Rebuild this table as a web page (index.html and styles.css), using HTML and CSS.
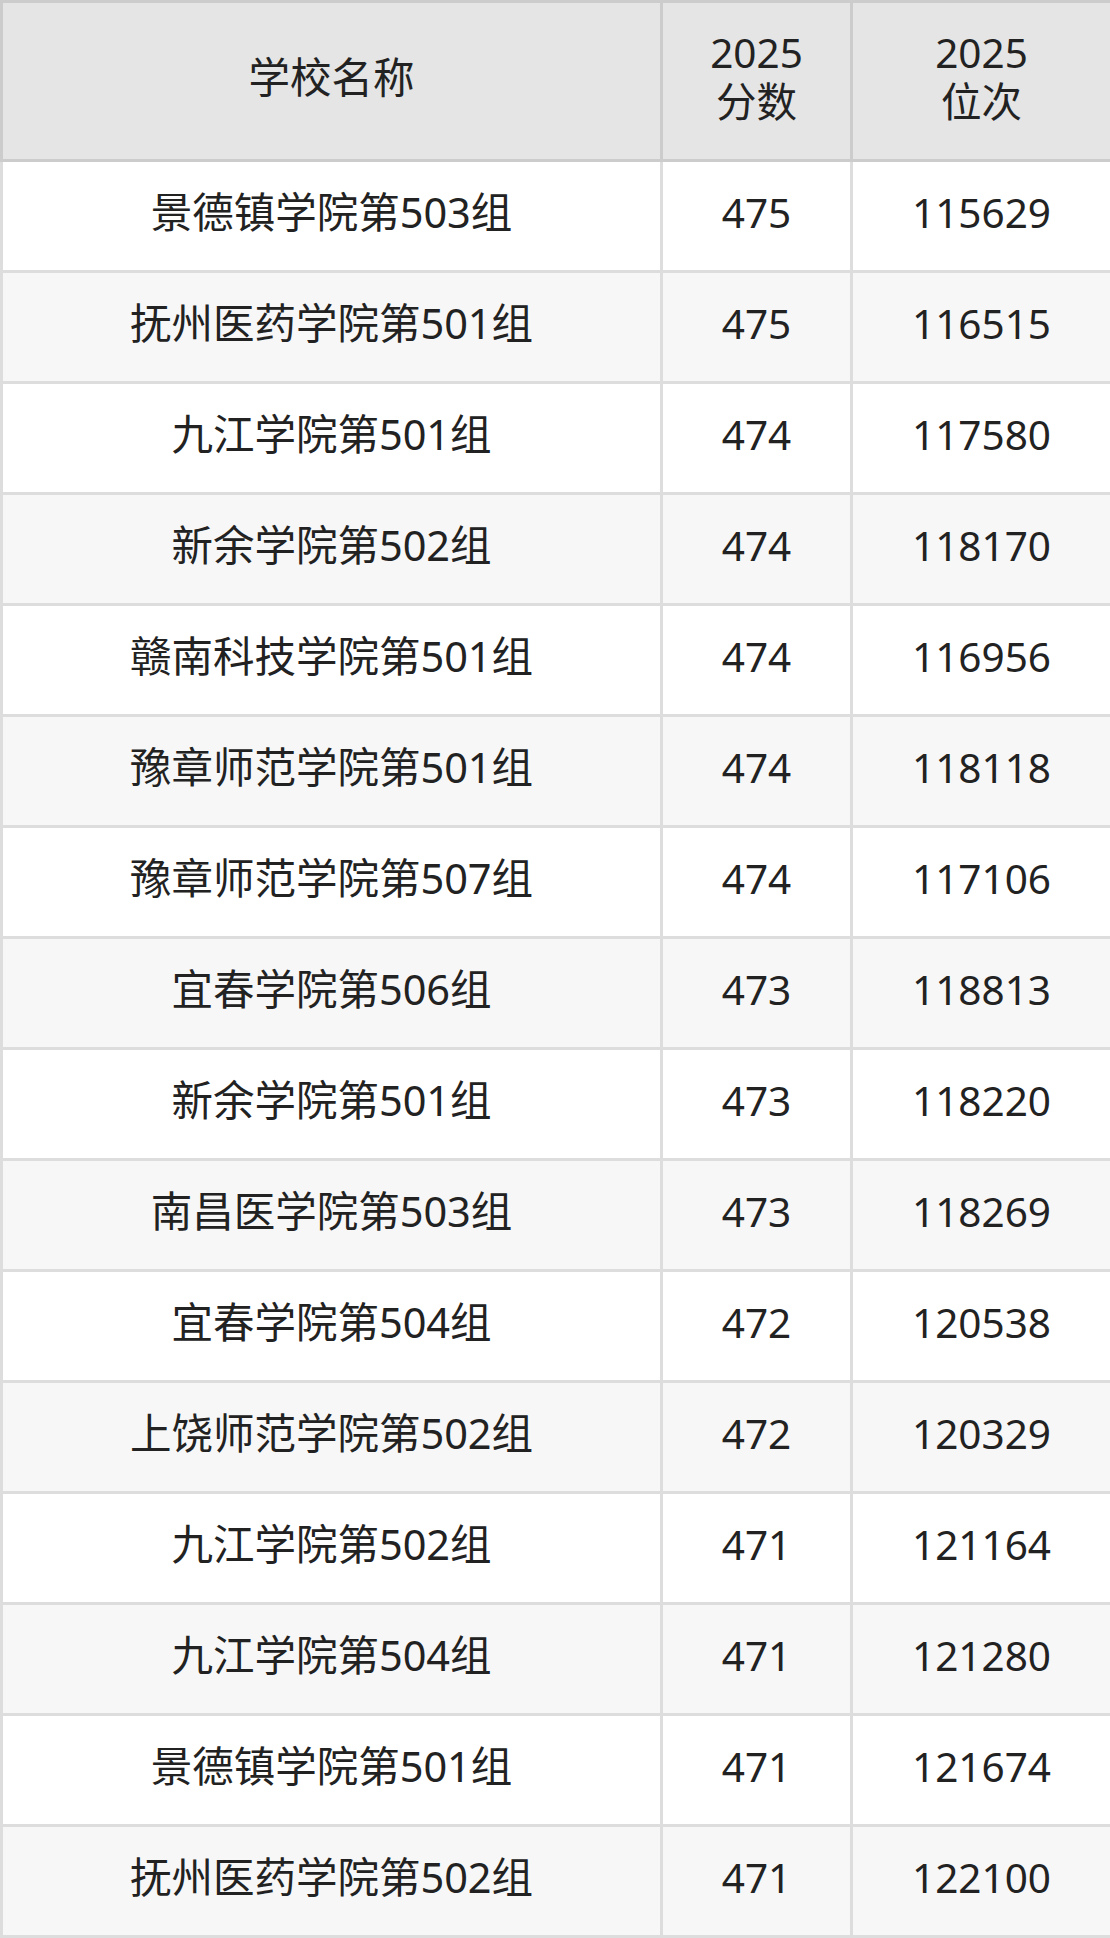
FILE: index.html
```html
<!DOCTYPE html>
<html lang="zh-CN">
<head>
<meta charset="utf-8">
<title>学校名称</title>
<link rel="stylesheet" href="styles.css">
</head>
<body>
<table class="score-table">
  <colgroup>
    <col class="col-name">
    <col class="col-score">
    <col class="col-rank">
  </colgroup>
  <thead>
    <tr>
      <th class="name">学校名称</th>
      <th class="num">2025<br>分数</th>
      <th class="num">2025<br>位次</th>
    </tr>
  </thead>
  <tbody>
    <tr><td class="name">景德镇学院第503组</td><td class="num">475</td><td class="num">115629</td></tr>
    <tr><td class="name">抚州医药学院第501组</td><td class="num">475</td><td class="num">116515</td></tr>
    <tr><td class="name">九江学院第501组</td><td class="num">474</td><td class="num">117580</td></tr>
    <tr><td class="name">新余学院第502组</td><td class="num">474</td><td class="num">118170</td></tr>
    <tr><td class="name">赣南科技学院第501组</td><td class="num">474</td><td class="num">116956</td></tr>
    <tr><td class="name">豫章师范学院第501组</td><td class="num">474</td><td class="num">118118</td></tr>
    <tr><td class="name">豫章师范学院第507组</td><td class="num">474</td><td class="num">117106</td></tr>
    <tr><td class="name">宜春学院第506组</td><td class="num">473</td><td class="num">118813</td></tr>
    <tr><td class="name">新余学院第501组</td><td class="num">473</td><td class="num">118220</td></tr>
    <tr><td class="name">南昌医学院第503组</td><td class="num">473</td><td class="num">118269</td></tr>
    <tr><td class="name">宜春学院第504组</td><td class="num">472</td><td class="num">120538</td></tr>
    <tr><td class="name">上饶师范学院第502组</td><td class="num">472</td><td class="num">120329</td></tr>
    <tr><td class="name">九江学院第502组</td><td class="num">471</td><td class="num">121164</td></tr>
    <tr><td class="name">九江学院第504组</td><td class="num">471</td><td class="num">121280</td></tr>
    <tr><td class="name">景德镇学院第501组</td><td class="num">471</td><td class="num">121674</td></tr>
    <tr><td class="name">抚州医药学院第502组</td><td class="num">471</td><td class="num">122100</td></tr>
  </tbody>
</table>
</body>
</html>
```
FILE: styles.css
```css
html, body {
  margin: 0;
  padding: 0;
  background: #ffffff;
}

.score-table {
  width: 1110px;
  border-collapse: collapse;
  table-layout: fixed;
  font-family: "Noto Sans", "Noto Sans CJK SC", sans-serif;
  font-size: 41px;
  color: #222222;
}

.col-name { width: 660px; }
.col-score { width: 190px; }
.col-rank { width: 260px; }

.score-table th {
  background: #e5e5e5;
  border: 3px solid #cccccc;
  height: 148px;
  padding: 0 0 8px 0;
  font-weight: normal;
  line-height: 49px;
  text-align: center;
  vertical-align: middle;
}

.score-table td {
  border: 3px solid #dddddd;
  height: 100px;
  padding: 0 0 8px 0;
  line-height: 49px;
  text-align: center;
  vertical-align: middle;
}

.score-table .name {
  font-size: 41.5px;
}

.score-table .num {
  font-size: 40.5px;
}

.score-table tbody tr:nth-child(even) td {
  background: #f7f7f7;
}
```
